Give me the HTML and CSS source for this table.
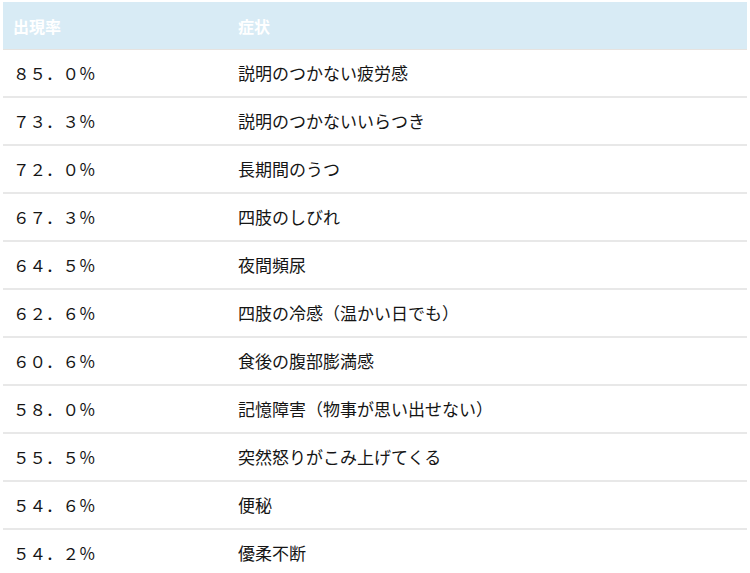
FILE: index.html
```html
<!DOCTYPE html>
<html lang="ja">
<head>
<meta charset="utf-8">
<link rel="stylesheet" href="styles.css">
</head>
<body>
<table class="tbl">
  <thead>
    <tr><th class="c1">出現率</th><th class="c2">症状</th></tr>
  </thead>
  <tbody>
    <tr><td class="c1">８５．０％</td><td class="c2">説明のつかない疲労感</td></tr>
    <tr><td class="c1">７３．３％</td><td class="c2">説明のつかないいらつき</td></tr>
    <tr><td class="c1">７２．０％</td><td class="c2">長期間のうつ</td></tr>
    <tr><td class="c1">６７．３％</td><td class="c2">四肢のしびれ</td></tr>
    <tr><td class="c1">６４．５％</td><td class="c2">夜間頻尿</td></tr>
    <tr><td class="c1">６２．６％</td><td class="c2">四肢の冷感（温かい日でも）</td></tr>
    <tr><td class="c1">６０．６％</td><td class="c2">食後の腹部膨満感</td></tr>
    <tr><td class="c1">５８．０％</td><td class="c2">記憶障害（物事が思い出せない）</td></tr>
    <tr><td class="c1">５５．５％</td><td class="c2">突然怒りがこみ上げてくる</td></tr>
    <tr><td class="c1">５４．６％</td><td class="c2">便秘</td></tr>
    <tr><td class="c1">５４．２％</td><td class="c2">優柔不断</td></tr>
  </tbody>
</table>
</body>
</html>
```
FILE: styles.css
```css
html, body {
  margin: 0;
  padding: 0;
  background: #fff;
}
body {
  padding: 2px 3px 0 3px;
  font-family: "Noto Sans CJK JP", "Noto Sans", sans-serif;
  color: #151515;
}
.tbl {
  width: 744px;
  border-collapse: collapse;
  table-layout: fixed;
}
.tbl th {
  background: #d8ebf5;
  color: #fff;
  font-weight: bold;
  font-size: 16px;
  line-height: 22px;
  text-align: left;
  height: 47px;
  padding: 0 0 0 10px;
  border-bottom: 1px solid #e6e3e0;
  vertical-align: middle;
}
.tbl td {
  font-size: 17px;
  line-height: 24px;
  height: 46px;
  padding: 0 0 0 10px;
  border-bottom: 2px solid #e8e8e8;
  vertical-align: middle;
  white-space: nowrap;
}
.tbl td.c1 { font-size: 16.5px; }
.tbl .c1 { width: 225px; }
.tbl .c2 { padding-left: 0; }
```
